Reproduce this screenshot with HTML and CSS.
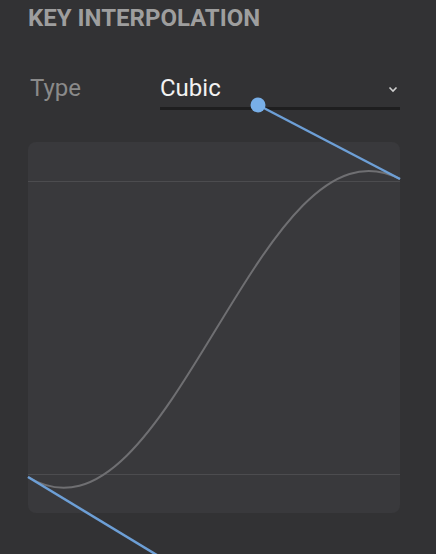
FILE: index.html
```html
<!DOCTYPE html>
<html lang="en">
<head>
  <meta charset="UTF-8">
  <title>Key Interpolation</title>
  <link rel="stylesheet" href="styles.css">
</head>
<body>
  <div class="panel">
    <h2 class="title">KEY INTERPOLATION</h2>

    <div class="field">
      <span class="field-label">Type</span>
      <div class="select">
        <span class="select-value">Cubic</span>
        <svg class="chevron" width="10" height="7" viewBox="0 0 10 7">
          <path d="M1.5 1.5 L5 5 L8.5 1.5" fill="none" stroke="#cfcfcf" stroke-width="1.6"/>
        </svg>
      </div>
    </div>

    <div class="graph">
      <div class="grid-line top"></div>
      <div class="grid-line bottom"></div>
      <!-- curve + handles, coords relative to the graph box -->
      <svg class="curve" width="372" height="371" viewBox="0 0 372 371">
        <path d="M0 335 C142 421 230 -37 372 37" fill="none" stroke="#6f6f72" stroke-width="2"/>
        <line x1="0" y1="335" x2="142" y2="421" stroke="#6d9fd6" stroke-width="2.5"/>
        <line x1="230" y1="-37" x2="372" y2="37" stroke="#6d9fd6" stroke-width="2.5"/>
        <circle cx="230" cy="-37" r="7.5" fill="#78afe8"/>
      </svg>
    </div>
  </div>
</body>
</html>
```

FILE: styles.css
```css
body {
  margin: 0;
  background-color: #323234;
  font-family: Roboto, 'Noto Sans', sans-serif;
}
.panel {
  box-sizing: border-box;
  height: 554px;
  overflow: hidden;
  padding: 4px 36px 0 28px;
  width: 436px;
}
.title {
  margin: 0;
  font-size: 24px;
  font-weight: 700;
  color: #9e9e9e;
  line-height: 28px;
}
.field {
  display: flex;
  align-items: flex-end;
  margin-top: 41px;
}
.field-label {
  width: 130px;
  padding-left: 2px;
  font-size: 24px;
  color: #8a8a8a;
  line-height: 30px;
  margin-bottom: 7px;
}
.select {
  flex: 1;
  display: flex;
  align-items: center;
  justify-content: space-between;
  border-bottom: 3px solid #1e1e1f;
  padding-bottom: 4px;
}
.select-value {
  font-size: 24px;
  color: #f2f2f2;
  line-height: 30px;
}
.chevron {
  margin-right: 2px;
  margin-top: 2px;
}
.graph {
  position: relative;
  display: flow-root;
  margin-top: 32px;
  height: 371px;
  background-color: #39393c;
  border-radius: 8px;
}
.grid-line {
  height: 1px;
  background-color: #4c4c4f;
}
.grid-line.top {
  margin-top: 39px;
}
.grid-line.bottom {
  margin-top: 292px;
}
.curve {
  position: absolute;
  top: 0;
  left: 0;
  overflow: visible;
}
```
